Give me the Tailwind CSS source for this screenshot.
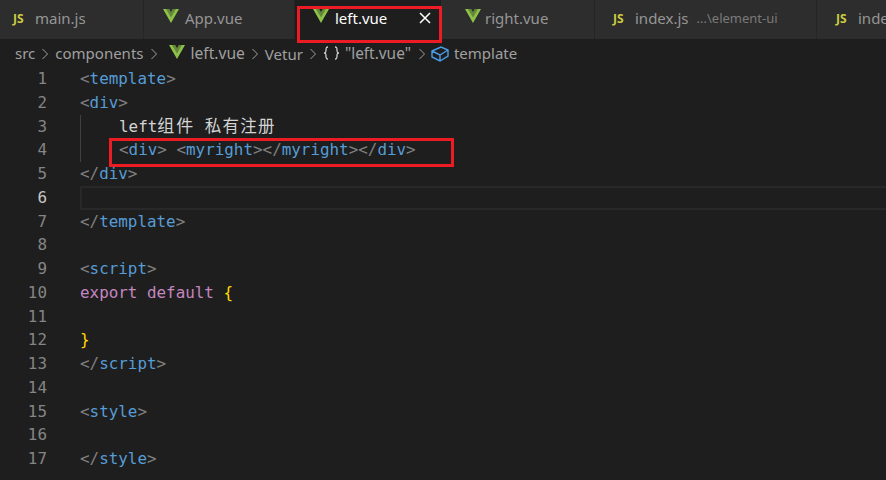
<!DOCTYPE html>
<html lang="en">
<head>
<meta charset="UTF-8" />
<title>left.vue</title>
<script src="https://cdn.jsdelivr.net/npm/@tailwindcss/browser@4"></script>
</head>
<body class="bg-[#1e1e1e] w-[886px] h-[480px] overflow-hidden relative font-['Noto_Sans','Noto_Sans_CJK_SC',sans-serif]">
  <svg class="hidden">
    <symbol id="vue" viewBox="0 0 16 14"><path fill="#8dc149" d="M0 0h6.2L8 3.2 9.8 0H16L8 14z"/><path fill="#1e1e1e" fill-opacity=".35" d="M3 0h3.2L8 3.2 9.8 0H13L8 8.6z"/></symbol>
  </svg>

  <!-- tabs -->
  <div class="flex h-[39px] bg-[#252526] text-[15px] text-[#969696] overflow-hidden">
    <div class="w-[144px] shrink-0 bg-[#2d2d2d] border-r border-[#252526] flex items-center pl-[13px] pb-[2px]">
      <span class="font-bold text-[12px] text-[#cbcb41] w-[22px]">JS</span><span>main.js</span>
    </div>
    <div class="w-[151px] shrink-0 bg-[#2d2d2d] border-r border-[#252526] flex items-center pl-[19px] pb-[2px]">
      <svg class="w-[16px] h-[14px] mr-[6px] -mt-[5px]"><use href="#vue"/></svg><span>App.vue</span>
    </div>
    <div class="w-[146px] shrink-0 bg-[#1e1e1e] flex items-center pl-[18px] pb-[2px] text-white">
      <svg class="w-[16px] h-[14px] mr-[6px] -mt-[5px]"><use href="#vue"/></svg><span>left.vue</span>
      <svg class="w-[12px] h-[12px] ml-[32px] -mt-[2px]" viewBox="0 0 12 12"><path d="M1 1l10 10M11 1L1 11" stroke="#fff" stroke-width="1.5"/></svg>
    </div>
    <div class="w-[154px] shrink-0 bg-[#2d2d2d] border-r border-[#252526] flex items-center pl-[24px] pb-[2px]">
      <svg class="w-[16px] h-[14px] mr-[4px] -mt-[5px]"><use href="#vue"/></svg><span>right.vue</span>
    </div>
    <div class="w-[222px] shrink-0 bg-[#2d2d2d] border-r border-[#252526] flex items-center pl-[18px] pb-[2px]">
      <span class="font-bold text-[12px] text-[#cbcb41] w-[22px]">JS</span><span>index.js</span><span class="ml-[8px] text-[13px] text-[#7a7a7a]">...\element-ui</span>
    </div>
    <div class="flex-1 bg-[#2d2d2d] flex items-center pl-[19px] pb-[2px] whitespace-nowrap">
      <span class="font-bold text-[12px] text-[#cbcb41] w-[22px]">JS</span><span>index.js</span>
    </div>
  </div>

  <!-- breadcrumbs -->
  <div class="flex items-center h-[29px] pl-[15px] text-[15px] text-[#a0a0a0] whitespace-nowrap">
    <span>src</span>
    <svg class="w-[8px] h-[12px] mx-[6px]" viewBox="0 0 8 12"><path d="M1.5 1l5 5-5 5" fill="none" stroke="#a0a0a0"/></svg>
    <span>components</span>
    <svg class="w-[8px] h-[12px] ml-[7px] mr-[11px]" viewBox="0 0 8 12"><path d="M1.5 1l5 5-5 5" fill="none" stroke="#a0a0a0"/></svg>
    <svg class="w-[16px] h-[14px] mr-[5px] -mt-[4px]"><use href="#vue"/></svg>
    <span class="text-[15.6px]">left.vue</span>
    <svg class="w-[8px] h-[12px] mx-[6px]" viewBox="0 0 8 12"><path d="M1.5 1l5 5-5 5" fill="none" stroke="#a0a0a0"/></svg>
    <span class="mt-[2px]">Vetur</span>
    <svg class="w-[8px] h-[12px] mx-[6px]" viewBox="0 0 8 12"><path d="M1.5 1l5 5-5 5" fill="none" stroke="#a0a0a0"/></svg>
    <svg class="w-[17px] h-[14px] mr-[5px] -mt-[2px]" viewBox="0 0 17 14"><path d="M5 1C3 1 3 2 3 4s0 3-2 3c2 0 2 1 2 3s0 3 2 3M12 1c2 0 2 1 2 3s0 3 2 3c-2 0-2 1-2 3s0 3-2 3" fill="none" stroke="#d4d4d4" stroke-width="1.3"/></svg>
    <span class="text-[15.4px]">"left.vue"</span>
    <svg class="w-[8px] h-[12px] ml-[7px] mr-[5px]" viewBox="0 0 8 12"><path d="M1.5 1l5 5-5 5" fill="none" stroke="#a0a0a0"/></svg>
    <svg class="w-[18px] h-[16px] mr-[5px]" viewBox="0 0 18 16"><path d="M1 5l9-4 7 3v6l-8 5-8-4zM1 5l8 4 8-5M9 9v6" fill="none" stroke="#4a9ee8" stroke-width="1.4"/></svg>
    <span>template</span>
  </div>

  <!-- editor -->
  <div class="flex text-[15.9px] leading-[23.75px] font-['DejaVu_Sans_Mono','Noto_Sans_CJK_SC',monospace] whitespace-nowrap -mt-[1px]">
    <div class="w-[80px] shrink-0 pr-[33px] text-right text-[#858585]">
      <div>1</div><div>2</div><div>3</div><div>4</div><div>5</div><div class="text-[#c6c6c6]">6</div><div>7</div><div>8</div><div>9</div><div>10</div><div>11</div><div>12</div><div>13</div><div>14</div><div>15</div><div>16</div><div>17</div>
    </div>
    <div class="flex-1 text-[#569cd6]">
      <div><span class="text-[#808080]">&lt;</span>template<span class="text-[#808080]">&gt;</span></div>
      <div><span class="text-[#808080]">&lt;</span>div<span class="text-[#808080]">&gt;</span></div>
      <div class="border-l border-[#404040] pl-[38px] text-[#d4d4d4]">left<span class="text-[17px] tracking-[2px]">组件</span> <span class="text-[16.5px] tracking-[1.2px]">私有注册</span></div>
      <div class="border-l border-[#404040] pl-[38px]"><span class="text-[#808080]">&lt;</span>div<span class="text-[#808080]">&gt;</span> <span class="text-[#808080]">&lt;</span>myright<span class="text-[#808080]">&gt;&lt;/</span>myright<span class="text-[#808080]">&gt;&lt;/</span>div<span class="text-[#808080]">&gt;</span></div>
      <div><span class="text-[#808080]">&lt;/</span>div<span class="text-[#808080]">&gt;</span></div>
      <div class="h-[23.75px] border-y-2 border-l-2 border-[#282828]"></div>
      <div><span class="text-[#808080]">&lt;/</span>template<span class="text-[#808080]">&gt;</span></div>
      <div class="h-[23.75px]"></div>
      <div><span class="text-[#808080]">&lt;</span>script<span class="text-[#808080]">&gt;</span></div>
      <div class="text-[#c586c0]">export default <span class="text-[#ffd700]">{</span></div>
      <div class="h-[23.75px]"></div>
      <div class="text-[#ffd700]">}</div>
      <div><span class="text-[#808080]">&lt;/</span>script<span class="text-[#808080]">&gt;</span></div>
      <div class="h-[23.75px]"></div>
      <div><span class="text-[#808080]">&lt;</span>style<span class="text-[#808080]">&gt;</span></div>
      <div class="h-[23.75px]"></div>
      <div><span class="text-[#808080]">&lt;/</span>style<span class="text-[#808080]">&gt;</span></div>
    </div>
  </div>

  <!-- red annotation boxes -->
  <div class="absolute left-[297px] top-[6px] w-[145px] h-[37px] border-[3px] border-[#ed1c24]"></div>
  <div class="absolute left-[109px] top-[138px] w-[345px] h-[29px] border-[3px] border-[#ed1c24]"></div>
</body>
</html>
